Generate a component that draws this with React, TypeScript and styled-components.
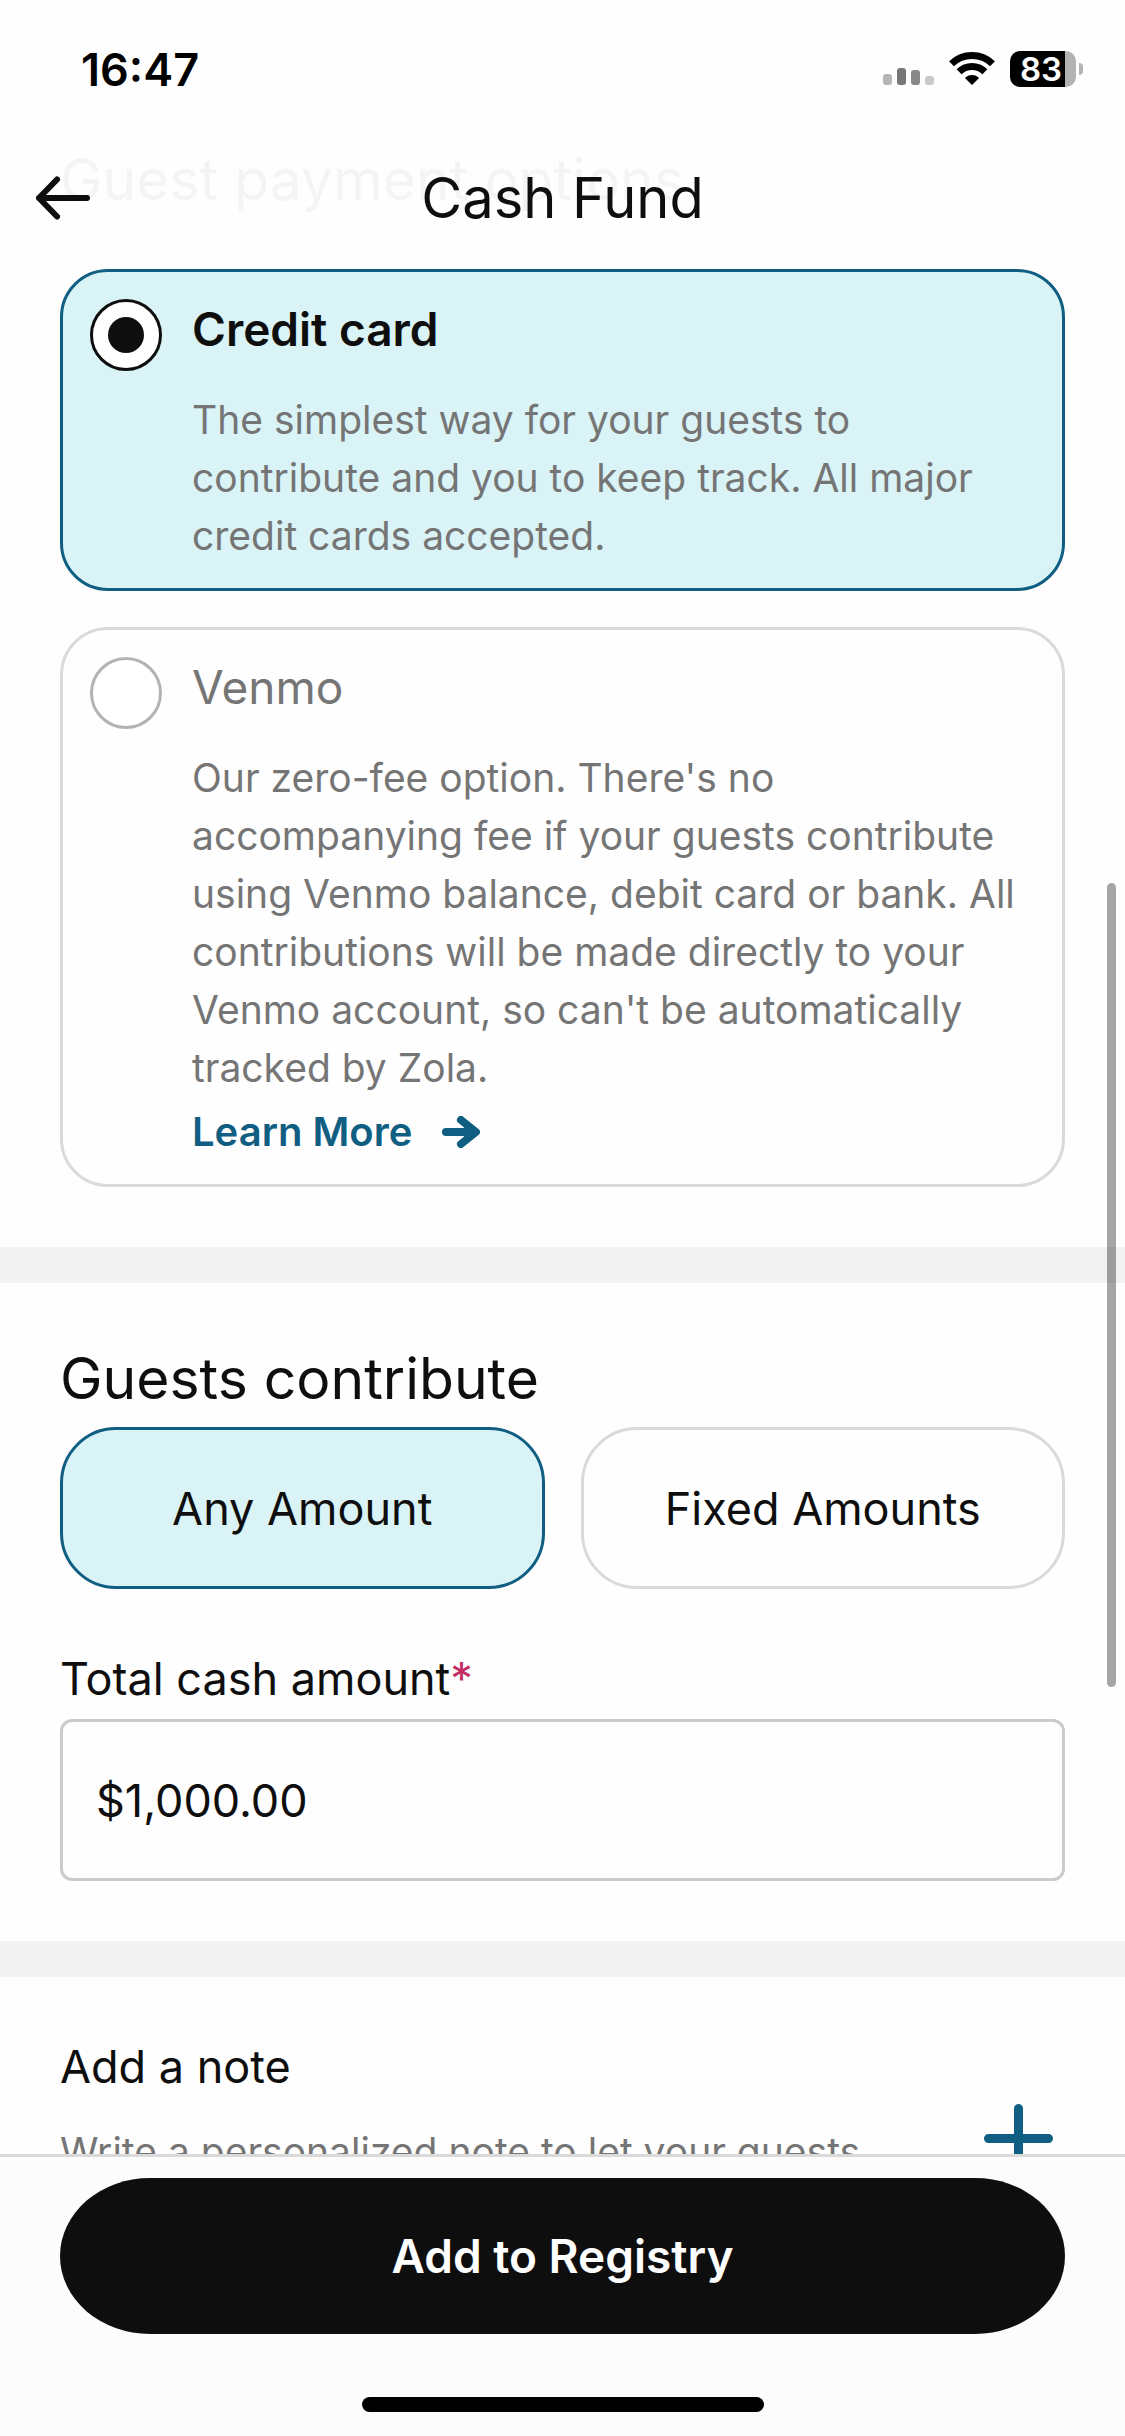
import React, { useState } from "react";
import styled, { createGlobalStyle } from "styled-components";

const ink = "#0e0e0e";
const muted = "#757575";
const teal = "#115e83";
const tint = "#d9f3f6";
const line = "#dadada";

const GlobalStyle = createGlobalStyle`
  *, *::before, *::after { box-sizing: border-box; }
  body { margin: 0; background: #fefefe; }
  button, input { font: inherit; color: inherit; margin: 0; }
  h1, h2, h3, p { margin: 0; font-weight: 400; }
`;

const Screen = styled.div`
  position: relative;
  display: flex;
  flex-direction: column;
  height: 100vh;
  overflow: hidden;
  color: ${ink};
  background: #fefefe;
  font-family: Inter, "Liberation Sans", sans-serif;
`;

const Header = styled.header`
  position: absolute;
  z-index: 1;
  top: 0;
  left: 0;
  right: 0;
  background: rgba(254, 254, 254, 0.96);
`;

const StatusBar = styled.div`
  display: flex;
  align-items: center;
  justify-content: space-between;
  height: 138px;
  padding: 0 42px 0 81px;
  color: #000;
`;

const Time = styled.span`
  font-size: 45px;
  font-weight: 600;
`;

const StatusIcons = styled.div`
  display: flex;
  align-items: center;
  gap: 15px;
`;

const Battery = styled.div`
  display: flex;
  align-items: center;
  gap: 3px;
`;

const BatteryBody = styled.div`
  width: 66px;
  height: 36px;
  padding-left: 10px;
  border-radius: 10px;
  background: linear-gradient(to right, #000 55px, #b3b3b3 55px);
  color: #fff;
  font-size: 33px;
  line-height: 36px;
  font-weight: 600;
`;

const BatteryTip = styled.div`
  width: 4px;
  height: 12px;
  border-radius: 0 4px 4px 0;
  background: #b3b3b3;
`;

const NavBar = styled.div`
  display: grid;
  grid-template-columns: 90px 1fr 90px;
  align-items: center;
  height: 120px;
`;

const BackButton = styled.button`
  display: flex;
  justify-content: flex-end;
  padding: 0;
  border: 0;
  background: none;
`;

const Title = styled.h1`
  font-size: 56px;
  line-height: 72px;
  text-align: center;
`;

const Content = styled.main`
  flex: 1;
  min-height: 0;
  overflow: hidden;
`;

const Section = styled.section<{ $first?: boolean }>`
  padding: ${(p) => (p.$first ? 144 : 60)}px 60px 60px;

  & + & {
    border-top: 36px solid #f2f2f2;
  }
`;

const Heading = styled.h2<{ $gap: number }>`
  margin-bottom: ${(p) => p.$gap}px;
  font-size: 57px;
  line-height: 72px;
`;

const Cards = styled.div`
  display: flex;
  flex-direction: column;
  gap: 36px;
`;

const Card = styled.div<{ $selected: boolean }>`
  display: grid;
  grid-template-columns: 72px 1fr;
  column-gap: 30px;
  align-items: start;
  padding: 27px 27px 23px;
  border: 3px solid ${(p) => (p.$selected ? teal : line)};
  border-radius: 48px;
  background: ${(p) => (p.$selected ? tint : "transparent")};
`;

const Radio = styled.input`
  appearance: none;
  display: grid;
  place-items: center;
  width: 72px;
  height: 72px;
  border: 3px solid #b3b3b3;
  border-radius: 50%;
  background: #fff;

  &:checked {
    border-color: ${ink};
  }

  &:checked::before {
    content: "";
    width: 36px;
    height: 36px;
    border-radius: 50%;
    background: ${ink};
  }
`;

const CardLabel = styled.label<{ $selected: boolean }>`
  display: block;
  margin-bottom: 32px;
  font-size: 46px;
  line-height: 60px;
  font-weight: ${(p) => (p.$selected ? 600 : 400)};
  color: ${(p) => (p.$selected ? ink : muted)};
`;

const Body = styled.p`
  font-size: 39px;
  line-height: 58px;
  color: ${muted};
`;

const LearnMore = styled.a`
  display: flex;
  align-items: center;
  gap: 30px;
  margin-top: 6px;
  font-size: 40px;
  line-height: 58px;
  font-weight: 600;
  color: ${teal};
  text-decoration: none;
`;

const Choices = styled.div`
  display: grid;
  grid-template-columns: 1fr 1fr;
  gap: 36px;
`;

const Choice = styled.button<{ $selected: boolean }>`
  height: 162px;
  padding: 0;
  border: 3px solid ${(p) => (p.$selected ? teal : line)};
  border-radius: 56px;
  background: ${(p) => (p.$selected ? tint : "transparent")};
  font-size: 45px;
`;

const FieldLabel = styled.label`
  display: block;
  margin: 60px 0 10px;
  font-size: 45px;
  line-height: 60px;
`;

const Required = styled.span`
  color: #c22e63;
`;

const TextField = styled.input`
  display: block;
  width: 100%;
  height: 162px;
  padding: 0 33px;
  border: 3px solid #cbcbcb;
  border-radius: 12px;
  background: transparent;
  font-size: 45px;
`;

const NoteRow = styled.div`
  display: flex;
  align-items: center;
  justify-content: space-between;
  min-height: 202px;
  padding-right: 12px;
`;

const NoteText = styled.div`
  align-self: flex-start;
`;

const NoteTitle = styled.h3`
  margin-bottom: 26px;
  font-size: 45px;
  line-height: 60px;
`;

const PlusButton = styled.button`
  display: flex;
  padding: 0;
  border: 0;
  background: none;
`;

const ScrollThumb = styled.div`
  position: absolute;
  z-index: 2;
  top: 883px;
  right: 9px;
  width: 9px;
  height: 804px;
  border-radius: 5px;
  background: rgba(0, 0, 0, 0.35);
`;

const Footer = styled.footer`
  display: flex;
  flex-direction: column;
  gap: 63px;
  padding: 21px 60px 24px;
  border-top: 3px solid ${line};
  background: #fcfcfc;
`;

const PrimaryButton = styled.button`
  height: 156px;
  padding: 0;
  border: 0;
  border-radius: 90px / 78px;
  background: ${ink};
  color: #fff;
  font-size: 46px;
  font-weight: 600;
`;

const HomeIndicator = styled.div`
  align-self: center;
  width: 402px;
  height: 15px;
  border-radius: 8px;
  background: #000;
`;

const SignalIcon = () => (
  <svg width="51" height="36" viewBox="0 0 51 36" aria-hidden="true">
    <rect x="0" y="23" width="9" height="11" rx="3" fill="#b5b5b5" />
    <rect x="14" y="17" width="9" height="17" rx="3" fill="#777" />
    <rect x="28" y="19" width="9" height="15" rx="3" fill="#888" />
    <rect x="42" y="25" width="9" height="9" rx="3" fill="#c9c9c9" />
  </svg>
);

const WifiIcon = () => (
  <svg width="46" height="34" viewBox="0 0 46 34" aria-hidden="true">
    <path d="M2.5 11.8A29.5 29.5 0 0 1 43.5 11.8" fill="none" stroke="#000" strokeWidth="7" />
    <path d="M10.1 19.7A18.5 18.5 0 0 1 35.9 19.7" fill="none" stroke="#000" strokeWidth="7" />
    <path d="M23 33L16.4 26.4Q16 25.8 16.6 25.3A10 10 0 0 1 29.4 25.3Q30 25.8 29.6 26.4Z" fill="#000" />
  </svg>
);

const BackIcon = () => (
  <svg width="54" height="44" viewBox="0 0 54 44" fill="none" stroke={ink} strokeWidth="6" strokeLinecap="round" strokeLinejoin="round" aria-hidden="true">
    <path d="M51 22H3M21 3.500L3 22L21 40.500" />
  </svg>
);

const ArrowIcon = () => (
  <svg width="38" height="32" viewBox="0 0 38 32" fill={teal} stroke={teal} strokeWidth="8" strokeLinecap="round" strokeLinejoin="round" aria-hidden="true">
    <path d="M4 16H30" />
    <path d="M19 4L34 16L19 28L24 16Z" strokeWidth="0" />
    <path d="M19 4L34 16L19 28" fill="none" />
  </svg>
);

const PlusIcon = () => (
  <svg width="69" height="69" viewBox="0 0 69 69" fill="none" stroke={teal} strokeWidth="9" strokeLinecap="round" aria-hidden="true">
    <path d="M34.500 4.500V64.500M4.500 34.500H64.500" />
  </svg>
);

export default function App() {
  const [method, setMethod] = useState("card");
  const [mode, setMode] = useState("any");
  const [amount, setAmount] = useState("$1,000.00");

  return (
    <Screen>
      <GlobalStyle />
      <Header>
        <StatusBar>
          <Time>16:47</Time>
          <StatusIcons>
            <SignalIcon />
            <WifiIcon />
            <Battery>
              <BatteryBody>83</BatteryBody>
              <BatteryTip />
            </Battery>
          </StatusIcons>
        </StatusBar>
        <NavBar>
          <BackButton aria-label="Back">
            <BackIcon />
          </BackButton>
          <Title>Cash Fund</Title>
        </NavBar>
      </Header>

      <Content>
        <Section $first>
          <Heading $gap={53}>Guest payment options</Heading>
          <Cards>
            <Card $selected={method === "card"}>
              <Radio type="radio" name="method" id="card" checked={method === "card"} onChange={() => setMethod("card")} />
              <div>
                <CardLabel htmlFor="card" $selected={method === "card"}>Credit card</CardLabel>
                <Body>The simplest way for your guests to contribute and you to keep track. All major credit cards accepted.</Body>
              </div>
            </Card>
            <Card $selected={method === "venmo"}>
              <Radio type="radio" name="method" id="venmo" checked={method === "venmo"} onChange={() => setMethod("venmo")} />
              <div>
                <CardLabel htmlFor="venmo" $selected={method === "venmo"}>Venmo</CardLabel>
                <Body>
                  Our zero-fee option. There's no accompanying fee if your guests contribute using Venmo balance, debit
                  card or bank. All contributions will be made directly to your Venmo account, so can't be automatically
                  tracked by Zola.
                </Body>
                <LearnMore href="#venmo">
                  Learn More
                  <ArrowIcon />
                </LearnMore>
              </div>
            </Card>
          </Cards>
        </Section>

        <Section>
          <Heading $gap={12}>Guests contribute</Heading>
          <Choices>
            <Choice $selected={mode === "any"} aria-pressed={mode === "any"} onClick={() => setMode("any")}>
              Any Amount
            </Choice>
            <Choice $selected={mode === "fixed"} aria-pressed={mode === "fixed"} onClick={() => setMode("fixed")}>
              Fixed Amounts
            </Choice>
          </Choices>
          <FieldLabel htmlFor="amount">
            Total cash amount<Required>*</Required>
          </FieldLabel>
          <TextField id="amount" type="text" value={amount} onChange={(e) => setAmount(e.target.value)} />
        </Section>

        <Section>
          <NoteRow>
            <NoteText>
              <NoteTitle>Add a note</NoteTitle>
              <Body>Write a personalized note to let your guests</Body>
            </NoteText>
            <PlusButton aria-label="Add a note">
              <PlusIcon />
            </PlusButton>
          </NoteRow>
        </Section>
      </Content>
      <ScrollThumb />

      <Footer>
        <PrimaryButton>Add to Registry</PrimaryButton>
        <HomeIndicator />
      </Footer>
    </Screen>
  );
}
